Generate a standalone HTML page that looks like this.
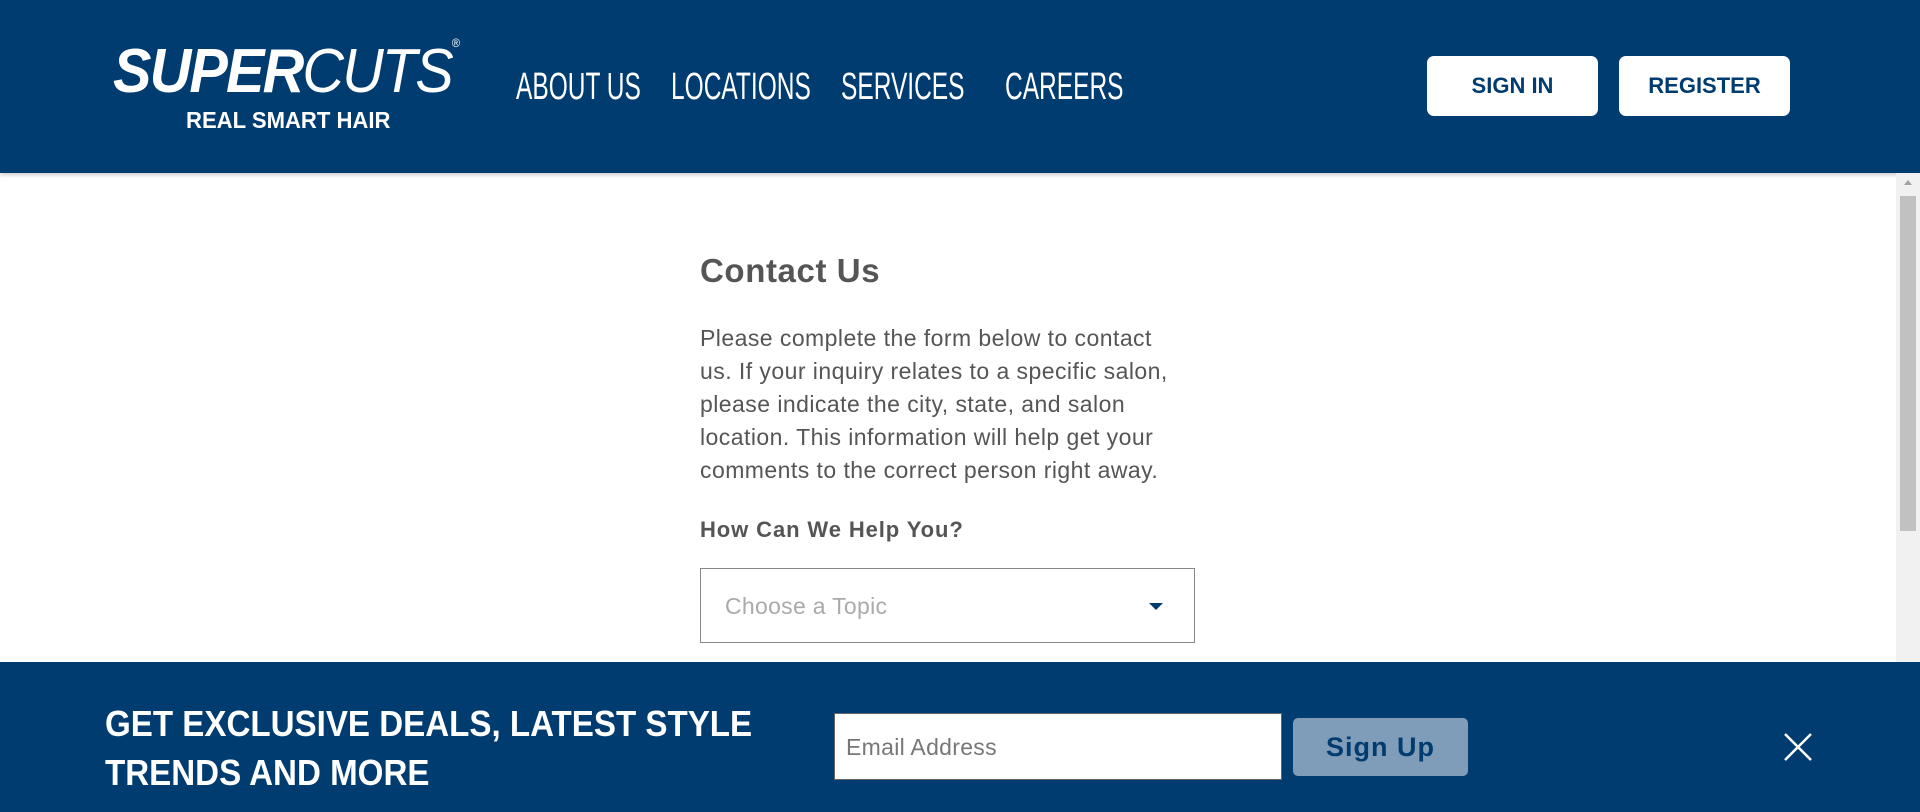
<!DOCTYPE html>
<html><head><meta charset="utf-8"><style>
*{margin:0;padding:0;box-sizing:border-box}
body{width:1920px;height:812px;overflow:hidden;background:#fff;font-family:"Liberation Sans",sans-serif;position:relative}
.hdr{position:absolute;left:0;top:0;width:1920px;height:173px;background:#013c71;box-shadow:0 2px 4px rgba(0,0,0,.2)}
.abs{position:absolute;white-space:nowrap}
.nav{color:#fff;font-size:38px;top:66px;transform-origin:0 0;transform:scaleX(0.645)}
.btn{position:absolute;top:56px;width:171px;height:60px;background:#fff;border-radius:7px;color:#013c71;font-weight:bold;font-size:22px;text-align:center;line-height:60px}
.sb{position:absolute;left:1896px;top:173px;width:24px;height:489px;background:#f1f1f1}
p.t{position:absolute;left:700px;top:322px;white-space:nowrap;font-size:23px;letter-spacing:0.45px;line-height:33px;color:#555}
.ban{position:absolute;left:0;top:662px;width:1920px;height:150px;background:#013c71}
</style></head><body>
<div class="hdr">
<div class="abs" style="left:113px;top:36px;color:#fff;font-size:62px;font-style:italic;letter-spacing:-2px;transform:scaleX(0.93);transform-origin:0 0"><b>SUPER</b>CUTS<span style="font-size:12px;vertical-align:top;font-style:normal">®</span></div>
<div class="abs" style="left:186px;top:107px;color:#fff;font-size:23px;font-weight:bold;transform:scaleX(0.96);transform-origin:0 0">REAL SMART HAIR</div>
<div class="abs nav" style="left:516px">ABOUT US</div>
<div class="abs nav" style="left:671px">LOCATIONS</div>
<div class="abs nav" style="left:841px">SERVICES</div>
<div class="abs nav" style="left:1005px">CAREERS</div>
<div class="btn" style="left:1427px">SIGN IN</div>
<div class="btn" style="left:1619px">REGISTER</div>
</div>
<div class="sb"><div style="position:absolute;left:4px;top:23px;width:16px;height:335px;background:#c1c1c1"></div>
<div style="position:absolute;left:8px;top:7px;border-left:4px solid transparent;border-right:4px solid transparent;border-bottom:5px solid #a3a3a3"></div></div>
<div class="abs" style="left:700px;top:252px;font-size:33px;letter-spacing:0.6px;font-weight:bold;color:#555">Contact Us</div>
<p class="t">Please complete the form below to contact<br>us. If your inquiry relates to a specific salon,<br>please indicate the city, state, and salon<br>location. This information will help get your<br>comments to the correct person right away.</p>
<div class="abs" style="left:700px;top:517px;font-size:22px;letter-spacing:0.9px;font-weight:bold;color:#555">How Can We Help You?</div>
<div style="position:absolute;left:700px;top:568px;width:495px;height:75px;border:1px solid #888;background:#fff">
<div class="abs" style="left:24px;top:24px;font-size:23px;letter-spacing:0.3px;color:#aaa">Choose a Topic</div>
<div style="position:absolute;left:448px;top:34px;border-left:7px solid transparent;border-right:7px solid transparent;border-top:7px solid #013c71"></div></div>
<div class="ban">
<div class="abs" style="left:105px;top:37px;color:#fff;font-size:36px;font-weight:bold;line-height:49px;transform:scaleX(0.92);transform-origin:0 0">GET EXCLUSIVE DEALS, LATEST STYLE<br>TRENDS AND MORE</div>
<div style="position:absolute;left:834px;top:51px;width:448px;height:67px;background:#fff;border:1px solid #666;"><div class="abs" style="left:11px;top:20px;font-size:23px;letter-spacing:0.3px;color:#777">Email Address</div></div>
<div style="position:absolute;left:1293px;top:56px;width:175px;height:58px;background:#7f9db9;border-radius:5px;color:#013c71;font-weight:bold;font-size:27px;letter-spacing:1px;text-align:center;line-height:58px">Sign Up</div>
<svg style="position:absolute;left:1783px;top:70px" width="30" height="30" viewBox="0 0 30 30"><path d="M2 2L28 28M28 2L2 28" stroke="#fff" stroke-width="2.5"/></svg>
</div>
</body></html>
